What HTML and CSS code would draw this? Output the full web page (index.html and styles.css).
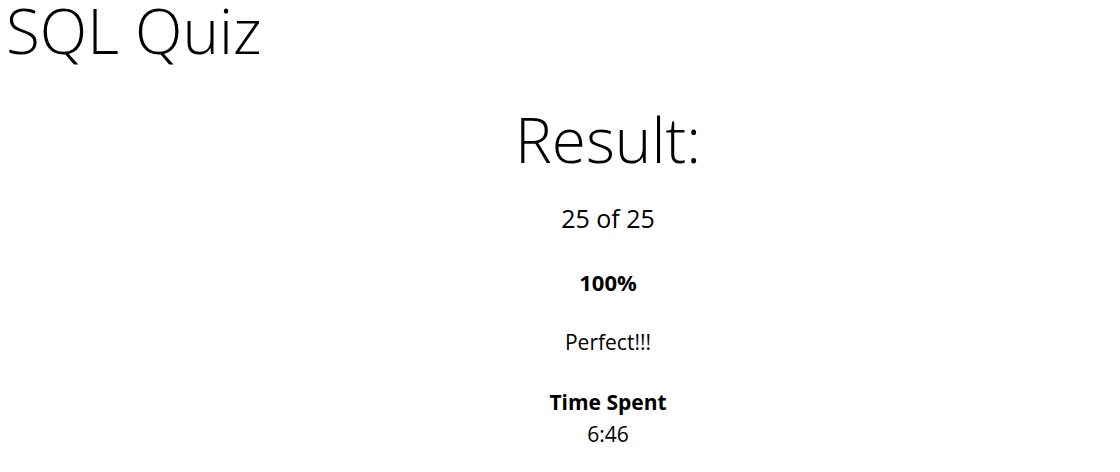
FILE: index.html
```html
<!DOCTYPE html>
<html lang="en">
<head>
<meta charset="utf-8">
<title>SQL Quiz</title>
<link rel="stylesheet" href="styles.css">
</head>
<body>
<header class="header">
  <h1 class="title">SQL Quiz</h1>
</header>
<main class="result">
  <h2 class="result-title">Result:</h2>
  <p class="score">25 of 25</p>
  <p class="percent">100%</p>
  <p class="verdict">Perfect!!!</p>
  <div class="time">
    <p class="time-label">Time Spent</p>
    <p class="time-value">6:46</p>
  </div>
</main>
</body>
</html>
```
FILE: styles.css
```css
html, body {
  margin: 0;
  padding: 0;
  background: #fff;
  color: #000;
  font-family: "Open Sans", "Noto Sans", sans-serif;
}

.header {
  padding-left: 6px;
}

.title {
  margin: 0;
  font-size: 62px;
  line-height: 60px;
  font-weight: 300;
}

.result {
  display: flex;
  flex-direction: column;
  align-items: center;
  padding-left: 96px;
  padding-top: 47px;
  text-align: center;
}

.result p {
  margin: 0;
}

.result-title {
  margin: 0 0 31px;
  font-size: 62px;
  line-height: 64px;
  font-weight: 300;
}

.score {
  font-size: 25px;
  line-height: 32px;
  margin-bottom: 32px !important;
}

.percent {
  font-size: 22px;
  line-height: 32px;
  font-weight: 700;
  margin-bottom: 28px !important;
}

.verdict {
  font-size: 21px;
  line-height: 32px;
  margin-bottom: 28px !important;
}

.time {
  display: flex;
  flex-direction: column;
  align-items: center;
}

.time-label {
  font-size: 21px;
  line-height: 32px;
  font-weight: 700;
}

.time-value {
  font-size: 21px;
  line-height: 32px;
}
```
